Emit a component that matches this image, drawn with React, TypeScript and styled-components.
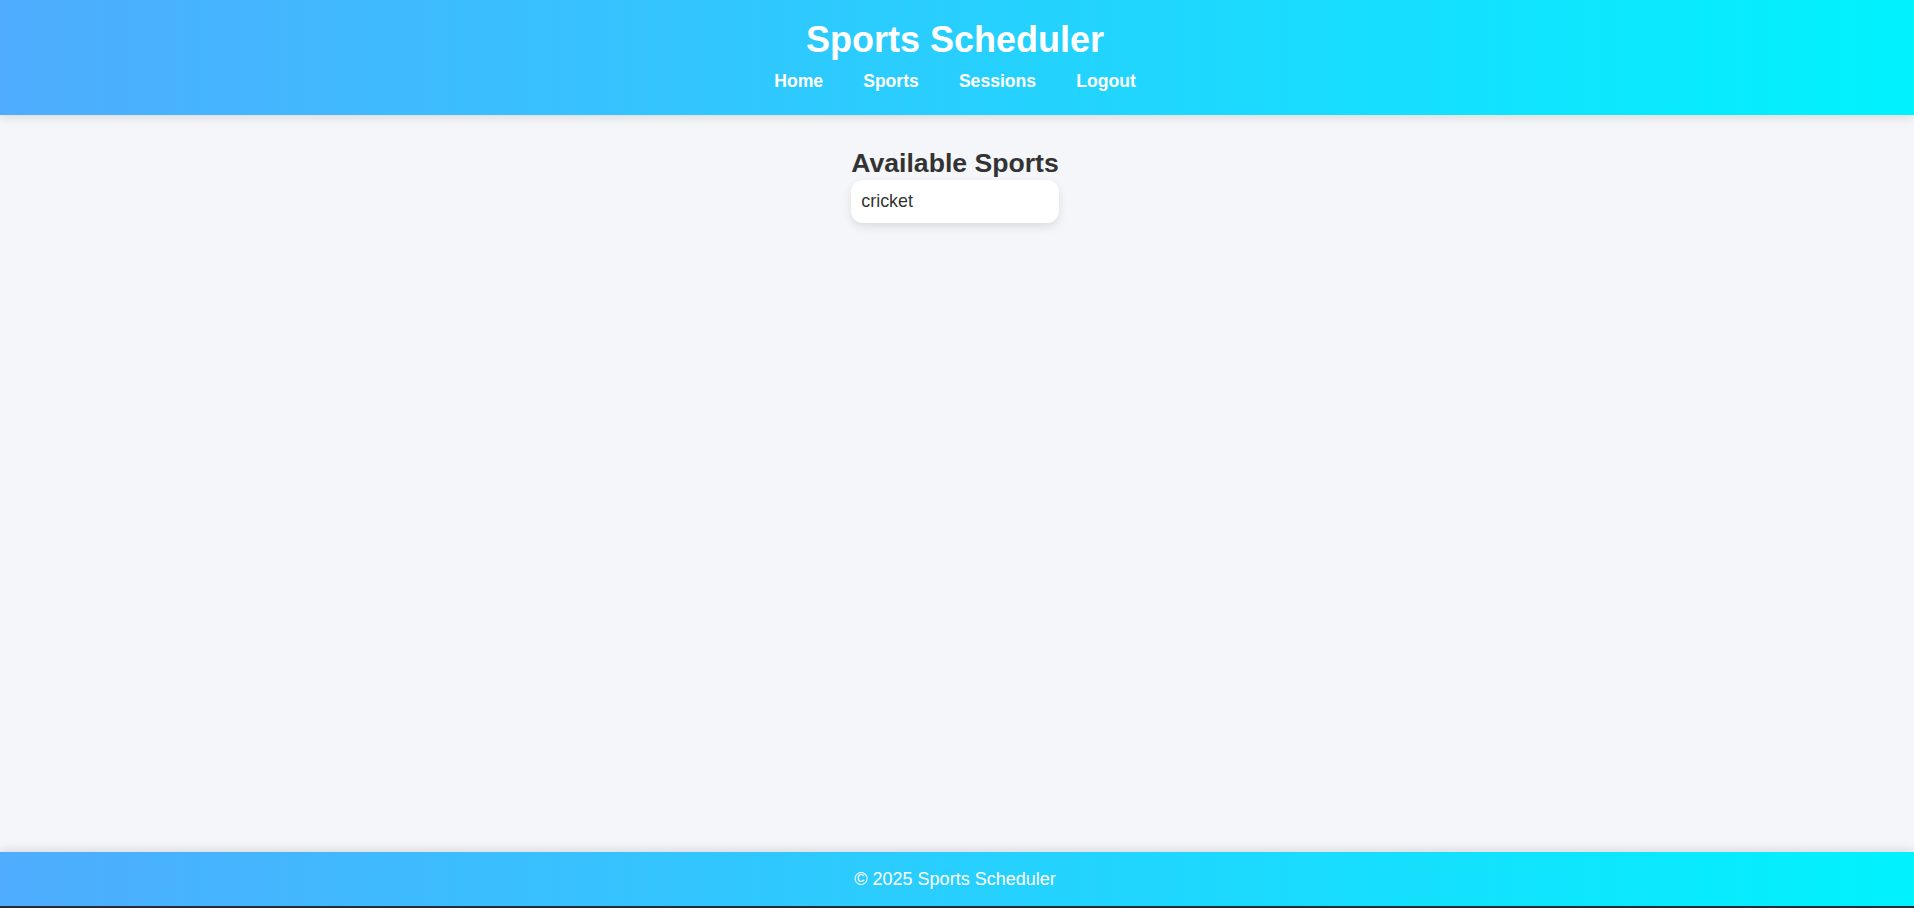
import React from "react";
import styled, { createGlobalStyle } from "styled-components";

const GlobalStyle = createGlobalStyle`
  html { background: #262b38; }
  body {
    margin: 0;
    font-family: "Liberation Sans", Arial, sans-serif;
  }
  * { box-sizing: border-box; }
`;

const Page = styled.div`
  min-height: 906px;
  display: flex;
  flex-direction: column;
  background: #f4f6f9;
`;

const Header = styled.header`
  background: linear-gradient(to right, #4facfe, #00f2fe);
  color: #fff;
  text-align: center;
  padding: 19px 4px 23px 0;
  box-shadow: 0 2px 10px rgba(0, 0, 0, 0.12);
  position: relative;
  z-index: 1;
`;

const Title = styled.h1`
  margin: 0;
  font-size: 36px;
  font-weight: 700;
  line-height: normal;
`;

const Nav = styled.nav`
  margin-top: 10px;
  display: flex;
  justify-content: center;
  gap: 40px;
`;

const NavLink = styled.a`
  color: #fff;
  text-decoration: none;
  font-weight: 700;
  font-size: 17.6px;
  line-height: normal;
`;

const Main = styled.main`
  flex: 1;
  display: flex;
  justify-content: center;
  padding: 33px 4px 0 0;
`;

const Section = styled.section`
  width: fit-content;
`;

const Heading = styled.h2`
  margin: 0;
  font-size: 26.6px;
  font-weight: 700;
  color: #333;
  line-height: normal;
`;

const List = styled.ul`
  list-style: none;
  margin: 1px 0 0;
  padding: 0;
`;

const Card = styled.li`
  background: #fff;
  border-radius: 12px;
  padding: 11px 10px;
  font-size: 17.9px;
  line-height: 21px;
  color: #333;
  box-shadow: 0 4px 10px rgba(0, 0, 0, 0.1);
`;

const Footer = styled.footer`
  background: linear-gradient(to right, #4facfe, #00f2fe);
  color: #fff;
  text-align: center;
  padding: 16px 4px 16px 0;
  font-size: 18px;
  line-height: 22px;
  box-shadow: 0 -2px 10px rgba(0, 0, 0, 0.12);
`;

const sports = ["cricket"];

export default function App() {
  return (
    <>
      <GlobalStyle />
      <Page>
        <Header>
          <Title>Sports Scheduler</Title>
          <Nav>
            <NavLink href="#">Home</NavLink>
            <NavLink href="#">Sports</NavLink>
            <NavLink href="#">Sessions</NavLink>
            <NavLink href="#">Logout</NavLink>
          </Nav>
        </Header>
        <Main>
          <Section>
            <Heading>Available Sports</Heading>
            <List>
              {sports.map((s) => (
                <Card key={s}>{s}</Card>
              ))}
            </List>
          </Section>
        </Main>
        <Footer>© 2025 Sports Scheduler</Footer>
      </Page>
    </>
  );
}
